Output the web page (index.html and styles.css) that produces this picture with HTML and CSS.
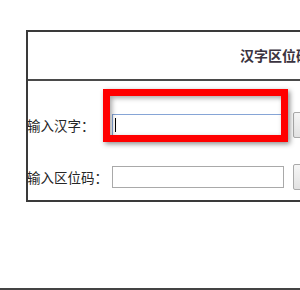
FILE: index.html
```html
<!DOCTYPE html>
<html lang="zh-CN">
<head>
    <meta charset="UTF-8">
    <meta name="viewport" content="width=device-width, initial-scale=1.0">
    <title>汉字区位码查询</title>
    <link rel="stylesheet" href="styles.css">
</head>
<body>
    <div class="page">
        <div class="panel">
            <div class="panel-head">汉字区位码查询</div>
            <div class="panel-body">
                <div class="row">
                    <label class="label" for="hanzi">输入汉字：</label>
                    <input type="text" id="hanzi" class="field field-active">
                    <button class="btn">查询</button>
                </div>
                <div class="row">
                    <label class="label" for="code">输入区位码：</label>
                    <input type="text" id="code" class="field">
                    <button class="btn">查询</button>
                </div>
            </div>
        </div>
        <div class="rule"></div>
        <div class="highlight"></div>
    </div>
</body>
</html>
```

FILE: styles.css
```css
html, body {
    margin: 0;
    padding: 0;
    background: #ffffff;
}

body {
    width: 300px;
    height: 290px;
    overflow: hidden;
    font-family: "Noto Sans CJK SC", "DejaVu Sans", sans-serif;
    color: #333333;
}

.page {
    position: relative;
    padding-top: 30px;
}

.panel {
    margin-left: 26px;
    width: 440px;
    border: 2px solid #3a3a3a;
    border-right: none;
}

.panel-head {
    height: 47px;
    line-height: 47px;
    padding-left: 212px;
    font-size: 14px;
    font-weight: bold;
    color: #3b3340;
    border-bottom: 2px solid #4a4a4a;
}

.panel-body {
    display: flex;
    flex-direction: column;
    gap: 30px;
    padding: 33px 0 12px 0;
}

.row {
    display: flex;
    align-items: center;
    height: 22px;
}

.label {
    width: 84px;
    margin-left: -1px;
    padding-right: 1px;
    font-size: 13.5px;
    color: #262626;
    white-space: nowrap;
}

.field {
    box-sizing: border-box;
    width: 172px;
    height: 22px;
    margin: 0;
    padding: 0 3px;
    border: 1px solid #a9a9a9;
    background: #ffffff;
    outline: none;
}

.field-active {
    border-color: #86a5d6;
    background: linear-gradient(#000000, #000000) no-repeat 2px center / 1px 14px, #ffffff;
}

.btn {
    box-sizing: border-box;
    height: 26px;
    width: 64px;
    margin-left: 9px;
    border: 1px solid #aaaaaa;
    border-radius: 2px;
    background: linear-gradient(#f6f6f6, #e2e2e2);
    font-size: 12px;
}

.rule {
    margin-top: 86px;
    height: 2px;
    background: #444444;
}

.highlight {
    position: absolute;
    left: 103px;
    top: 89px;
    width: 185px;
    height: 53px;
    box-sizing: border-box;
    border: 7px solid #ff0000;
    box-shadow: 2px 2px 5px rgba(0, 0, 0, 0.45), inset 2px 2px 5px rgba(0, 0, 0, 0.35);
}
```
